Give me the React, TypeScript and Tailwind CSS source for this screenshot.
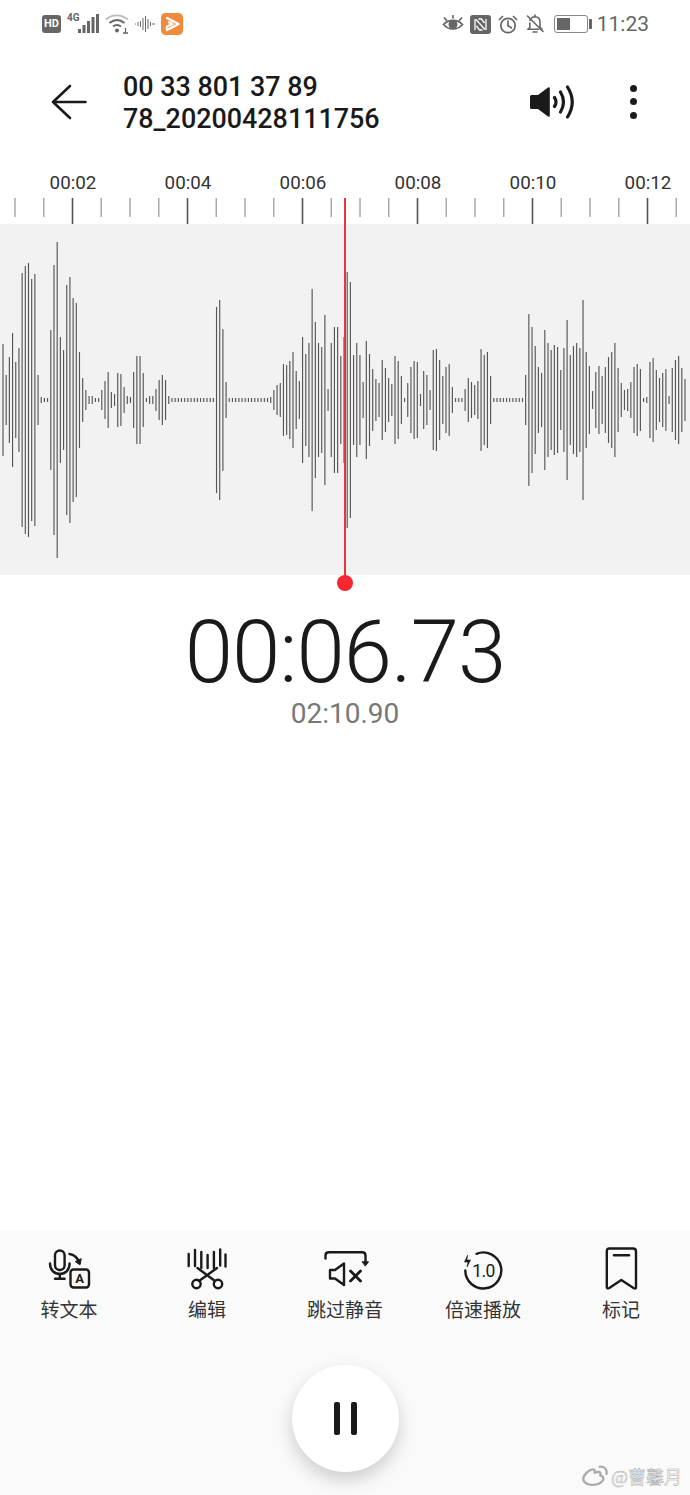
import { RiWeiboLine } from 'react-icons/ri'

const ROBOTO = "font-['Roboto',sans-serif]"
const CJK = "font-['Noto_Sans_CJK_SC','Noto_Sans',sans-serif]"

// half heights of the waveform bars, left to right, centred on the panel's middle line
const WAVE = [
  56, 25, 43, 67, 38, 52, 127, 134, 137, 121, 126, 25, 3, 2, 2, 70, 135, 158, 63, 50, 115, 123, 102, 97, 48, 22, 10, 4, 4, 2, 2, 10, 19, 28, 8, 6,
  27, 26, 13, 4, 3, 28, 44, 44, 27, 2, 4, 4, 11, 20, 25, 20, 4, 2, 2, 2, 2, 2, 2, 2, 2, 2, 2, 2, 2, 2, 2, 93, 100, 71, 18, 2,
  2, 2, 2, 2, 2, 2, 2, 2, 2, 2, 2, 2, 3, 10, 15, 17, 36, 35, 39, 48, 29, 19, 63, 46, 57, 111, 78, 57, 53, 85, 11, 57, 73, 73, 44, 63,
  128, 118, 45, 57, 45, 18, 59, 46, 31, 21, 17, 40, 32, 22, 16, 44, 39, 24, 2, 17, 33, 39, 38, 6, 29, 25, 10, 50, 51, 40, 24, 33, 36, 13, 2, 2,
  2, 11, 22, 18, 15, 19, 51, 45, 48, 24, 2, 2, 2, 2, 2, 2, 2, 2, 2, 2, 25, 86, 73, 54, 33, 27, 70, 57, 50, 55, 53, 30, 52, 80, 45, 54,
  57, 52, 100, 48, 34, 9, 28, 34, 24, 33, 43, 48, 57, 32, 17, 10, 11, 18, 33, 36, 31, 2, 3, 38, 42, 30, 22, 27, 31, 4, 32, 40, 44, 32, 21,
]

const LABELS = ['00:02', '00:04', '00:06', '00:08', '00:10', '00:12']
const TICKS = Array.from({ length: 24 }, (_, i) => i)

function MicIcon() {
  return (
    <svg width="48" height="48" viewBox="0 0 48 48" fill="none" stroke="#1a1a1a" strokeWidth="2.4" strokeLinecap="round" strokeLinejoin="round">
      <rect x="10" y="4.5" width="9.6" height="19.5" rx="4.8" />
      <path d="M5 17.5c0 6.5 4.200 10.500 9.800 10.500s9.800-4 9.800-10.500" />
      <path d="M14.800 28v4.500M10 32.800h9.600" />
      <path d="M24.500 8c4.500.5 8 3.500 10 9" />
      <path d="M36.200 13l-1.200 5.800-4.500-3z" fill="#1a1a1a" strokeWidth="1" />
      <rect x="25.500" y="23.500" width="18.500" height="18" rx="3" />
      <text x="34.700" y="37" textAnchor="middle" fontSize="13" fontWeight="700" fontFamily="Roboto" fill="#1a1a1a" stroke="none">A</text>
    </svg>
  )
}

function ScissorsIcon() {
  return (
    <svg width="48" height="48" viewBox="0 0 48 48" fill="none" stroke="#1a1a1a" strokeWidth="2.4" strokeLinecap="round">
      <path d="M5.700 8v12M12 4v16M18.300 6v16M24.600 9v13M30.900 6v16M37.200 3.500v16M42.500 8.500v12" />
      <path d="M14.500 22l17.500 13M34 22L16 35" />
      <circle cx="13.500" cy="38" r="4.200" />
      <circle cx="35" cy="38" r="4.200" />
    </svg>
  )
}

function SkipSilenceIcon() {
  return (
    <svg width="48" height="48" viewBox="0 0 48 48" fill="none" stroke="#1a1a1a" strokeWidth="2.4" strokeLinecap="round" strokeLinejoin="round">
      <path d="M4.500 12.500V9.500q0-3.200 3.500-3.200h33q3.500 0 3.500 3.200v6" />
      <path d="M41.500 15.800h6l-3 4z" fill="#1a1a1a" strokeWidth="1" />
      <path d="M9 24h5l9-6.500v21.500l-9-6.500H9z" />
      <path d="M29.500 25l10 10M39.500 25l-10 10" strokeWidth="2.800" />
    </svg>
  )
}

function SpeedIcon() {
  return (
    <svg width="48" height="48" viewBox="0 0 48 48" fill="none" stroke="#1a1a1a" strokeWidth="2.400" strokeLinecap="round" strokeLinejoin="round">
      <path d="M17.500 7.800A18 18 0 1 1 6.300 24.500" />
      <path d="M8.500 9.500L5.500 16h3.500l-1 5 3.500-7H8z" fill="#1a1a1a" strokeWidth="0.6" />
      <text x="24.500" y="30.500" textAnchor="middle" fontSize="17.500" letterSpacing="-0.6" fontFamily="Roboto" fontWeight="400" fill="#1a1a1a" stroke="none">1.0</text>
    </svg>
  )
}

function BookmarkIcon() {
  return (
    <svg width="48" height="48" viewBox="0 0 48 48" fill="none" stroke="#1a1a1a" strokeWidth="2.400" strokeLinecap="round" strokeLinejoin="round">
      <path d="M12.500 2.500h23.500q3 0 3 3v35.500q0 2.500-2.500 1L24.300 34l-12 8q-2.500 1.200-2.500-1V5.500q0-3 2.700-3z" />
      <path d="M17 9.200h15" />
    </svg>
  )
}

const TOOLS = [
  { label: '转文本', icon: <MicIcon /> },
  { label: '编辑', icon: <ScissorsIcon /> },
  { label: '跳过静音', icon: <SkipSilenceIcon /> },
  { label: '倍速播放', icon: <SpeedIcon /> },
  { label: '标记', icon: <BookmarkIcon /> },
]

function StatusBar() {
  return (
    <div className="flex h-12 items-center justify-between pl-[42px] pr-[41px]">
      <div className="flex items-center">
        <div className={`flex h-[18px] w-[19px] items-center justify-center rounded-[3px] bg-[#666] text-[11px] font-bold text-white ${ROBOTO}`}>HD</div>
        <div className="relative ml-[6px] h-5 w-[32px]">
          <span className={`absolute left-0 top-[-2px] text-[10px] font-bold leading-3 text-[#666] ${ROBOTO}`}>4G</span>
          <svg width="32" height="20" viewBox="0 0 32 20" fill="#666" className="absolute left-0 top-0">
            <rect x="11" y="15" width="3" height="4" />
            <rect x="15.500" y="11" width="3" height="8" />
            <rect x="20" y="7" width="3" height="12" />
            <rect x="24.500" y="3" width="3" height="16" />
            <rect x="29" y="0" width="3" height="19" />
          </svg>
        </div>
        <svg width="26" height="22" viewBox="0 0 26 22" fill="none" stroke="#666" className="ml-[5px]">
          <path d="M2 6.500C8 1 17 1 24 6.500" stroke="#bbb" strokeWidth="1.800" />
          <path d="M5.500 10c5-4 10-4 15 0M9 13.500c3-2.300 5-2.300 8 0" strokeWidth="2" />
          <circle cx="13" cy="17.500" r="2" fill="#666" stroke="none" />
          <path d="M19 20h5M21.500 15v5" strokeWidth="1.300" />
        </svg>
        <svg width="21" height="16" viewBox="0 0 21 16" fill="none" stroke="#666" strokeWidth="1" className="ml-[4px]">
          <path d="M1 8h1M4 6v4M6.500 5v6M9 2v12M11.500 0v16M14 3v10M16.500 6v4M19 7v2M20.500 7.500v1" />
        </svg>
        <svg width="22" height="22" viewBox="0 0 22 22" className="ml-[6px]">
          <rect width="22" height="22" rx="4.500" fill="#f08a3c" />
          <path d="M6 5L17.500 11 6 17v-3.500L11.500 11 8 9.200" fill="none" stroke="#fff" strokeWidth="2.400" strokeLinejoin="round" strokeLinecap="round" />
        </svg>
      </div>
      <div className="flex items-center">
        <svg width="22" height="18" viewBox="0 0 22 18" fill="none" stroke="#666" strokeWidth="1.700" strokeLinecap="round">
          <path d="M1.500 9.500C6.500 4 15.500 4 20.500 9.500 15.500 15.500 6.500 15.500 1.500 9.500z" />
          <circle cx="11" cy="9.500" r="3.600" fill="#666" />
          <path d="M2.500 3l2 2.200M19.500 3l-2 2.200M11 .8v2" />
        </svg>
        <svg width="21" height="19" viewBox="0 0 21 19" className="ml-[6px]">
          <rect width="21" height="19" rx="3" fill="#666" />
          <path d="M5 4v11M16 4v11M6 4.500l9 10M8.500 4h3l3 4M12.500 15h-3l-3-4" stroke="#fff" strokeWidth="1.300" fill="none" />
        </svg>
        <svg width="20" height="19" viewBox="0 0 20 19" fill="none" stroke="#666" strokeWidth="1.700" strokeLinecap="round" className="ml-[7px]">
          <circle cx="10" cy="10.500" r="7.200" />
          <path d="M10 6v4.800l3.300 2M1.500 4.500l3-3M18.500 4.500l-3-3" />
        </svg>
        <svg width="20" height="20" viewBox="0 0 20 20" fill="none" stroke="#666" strokeWidth="1.600" strokeLinecap="round" strokeLinejoin="round" className="ml-[7px]">
          <path d="M5 6.500C6 3.500 8 2.800 10 2.800c3.500 0 5 2.500 5 5.500v5l2 2M4.800 9v4.500l-2 1.800h11" />
          <path d="M8 18h4M10 1v1.800M2.500 2l15.500 15.500" />
        </svg>
        <div className="ml-[9px] flex items-center">
          <div className="h-[18px] w-[34px] rounded-[3px] border border-[#888] p-[2px]">
            <div className="h-full w-[13px] bg-[#666]" />
          </div>
          <div className="ml-[1px] h-[10px] w-[3px] rounded-r-[1px] bg-[#666]" />
        </div>
        <span className={`ml-[5px] text-[21px] leading-none text-[#666] ${ROBOTO}`}>11:23</span>
      </div>
    </div>
  )
}

function Header() {
  return (
    <div className="flex h-[118px] items-center pb-[11px] pl-[51px] pr-[53px]">
      <svg width="36" height="36" viewBox="0 0 36 36" fill="none" stroke="#1a1a1a" strokeWidth="2.600" strokeLinecap="round" strokeLinejoin="round">
        <path d="M34.500 18H2M19 2L2 18l17 16" />
      </svg>
      <div className={`ml-[36px] mt-[3px] flex-1 text-[26.900px] font-medium leading-[32px] text-[#1a1a1a] ${ROBOTO}`}>
        <div>00 33 801 37 89</div>
        <div>78_20200428111756</div>
      </div>
      <svg width="46" height="34" viewBox="0 0 46 34" fill="none" stroke="#1a1a1a" strokeWidth="3.200" strokeLinecap="round">
        <path d="M1 11.500q0-1.500 1.500-1.500H9L19 2.500q1.800-1 1.800 1v27q0 2-1.800 1L9 24H2.500Q1 24 1 22.500z" fill="#1a1a1a" stroke="none" />
        <path d="M25.500 12.500q3 4.500 0 9M31.500 7q6 10 0 20M38.500 2q9.500 15 0 30" />
      </svg>
      <div className="ml-[55px] flex h-[34px] w-[7px] flex-col justify-between">
        <div className="size-[7px] rounded-full bg-[#1a1a1a]" />
        <div className="size-[7px] rounded-full bg-[#1a1a1a]" />
        <div className="size-[7px] rounded-full bg-[#1a1a1a]" />
      </div>
    </div>
  )
}

function Ruler() {
  return (
    <div className="h-[58px]">
      <div className={`grid h-8 w-[690px] grid-cols-[repeat(6,115px)] items-center pl-[15.500px] pt-[3px] text-[18.800px] text-[#333] ${ROBOTO}`}>
        {LABELS.map(label => (
          <div key={label} className="text-center">{label}</div>
        ))}
      </div>
      <svg width="690" height="26" viewBox="0 0 690 26" className="block">
        {TICKS.map(i => {
          const x = 15 + i * 28.75
          const major = i % 4 === 2
          return (
            <line
              key={i}
              x1={x}
              x2={x}
              y1="0"
              y2={major ? 26 : 19}
              stroke={major ? '#555' : '#aaa'}
              strokeWidth={major ? 1.6 : 1.500}
            />
          )
        })}
      </svg>
    </div>
  )
}

function Waveform() {
  return (
    <div className="h-[351px] bg-[#f2f2f2]">
      <svg width="690" height="351" viewBox="0 0 690 351" className="block">
        {WAVE.map((h, i) => {
          const x = 3 + i * 3.187
          return <line key={i} x1={x} x2={x} y1={176 - h} y2={176 + h} stroke="#555" strokeWidth="1.150" />
        })}
      </svg>
    </div>
  )
}

export default function App() {
  return (
    <div className="relative flex h-[1495px] w-[690px] flex-col overflow-hidden bg-white">
      <StatusBar />
      <Header />
      <Ruler />
      <Waveform />

      {/* Playhead */}
      <div className="absolute left-[344px] top-[198px] h-[385px] w-[2px] bg-[#e8353f]" />
      <div className="absolute left-[337px] top-[575px] size-4 rounded-full bg-[#f5282f]" />

      {/* Timers */}
      <div className={`mt-[41px] text-center text-[87px] font-light leading-[72px] tracking-[-1px] text-[#1a1a1a] ${ROBOTO}`}>00:06.73</div>
      <div className={`mt-[9px] text-center text-[28px] leading-[34px] text-[#777] ${ROBOTO}`}>02:10.90</div>

      <div className="flex-1" />

      {/* Bottom tools */}
      <div className="flex h-[264px] flex-col items-center bg-[#fafafa] pt-[15px]">
        <div className="grid w-full grid-cols-5">
          {TOOLS.map(tool => (
            <div key={tool.label} className="flex flex-col items-center">
              {tool.icon}
              <span className={`mt-[3px] text-[19px] leading-6 text-[#333] ${CJK}`}>{tool.label}</span>
            </div>
          ))}
        </div>
        <div className="mt-[44px] flex size-[107px] items-center justify-center gap-[11px] rounded-full bg-white shadow-[0_8px_18px_rgba(0,0,0,0.18)]">
          <div className="h-[33px] w-[6px] rounded-[2px] bg-[#1a1a1a]" />
          <div className="h-[33px] w-[6px] rounded-[2px] bg-[#1a1a1a]" />
        </div>
      </div>

      {/* Watermark */}
      <div className="absolute bottom-[5px] right-[8px] flex items-center text-[#aaa]">
        <RiWeiboLine size={28} />
        <span className={`ml-[2px] text-[18px] leading-6 text-white [-webkit-text-stroke:0.5px_#aaa] ${CJK}`}>@曹馨月</span>
      </div>
    </div>
  )
}
